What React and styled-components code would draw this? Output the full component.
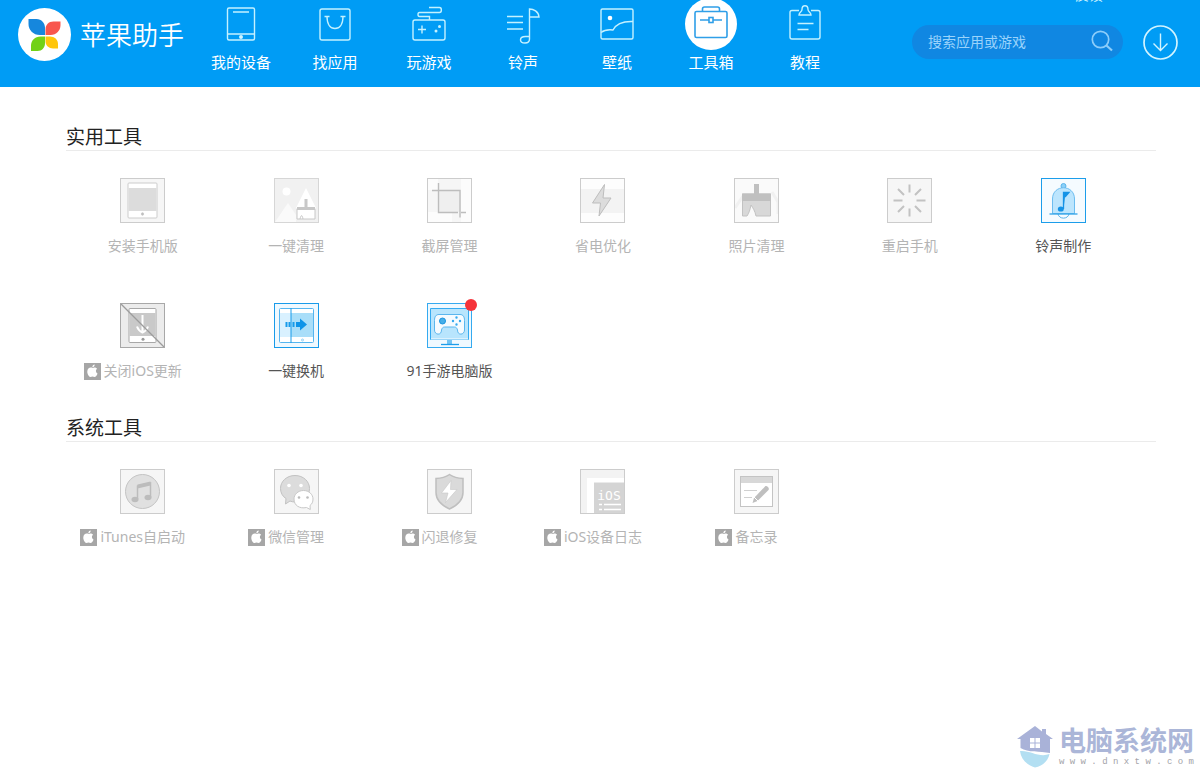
import { useState } from 'react';
import styled, { createGlobalStyle } from 'styled-components';

const GlobalStyle = createGlobalStyle`
  * {
    box-sizing: border-box;
  }

  body {
    margin: 0;
    background: #fff;
    font-family: "Noto Sans", "Noto Sans CJK SC", sans-serif;
  }

  button {
    padding: 0;
    border: none;
    background: none;
    font-family: inherit;
    cursor: pointer;
  }
`;

const Page = styled.div`
  min-height: 100vh;
  display: flex;
  flex-direction: column;
`;

const Header = styled.header`
  position: relative;
  height: 87px;
  display: flex;
  align-items: flex-start;
  padding: 0 22px 0 18px;
  background: #009cf5;
  color: #fff;
  overflow: hidden;
`;

const Brand = styled.a`
  display: flex;
  align-items: center;
  gap: 9px;
  margin-top: 8px;
  color: #fff;
  text-decoration: none;
`;

const BrandName = styled.span`
  padding-top: 2px;
  font-size: 26px;
  line-height: 51px;
  font-weight: 350;
  white-space: nowrap;
`;

const Nav = styled.nav`
  display: flex;
  margin-left: 10px;
`;

const NavItem = styled.button`
  width: 94px;
  display: flex;
  flex-direction: column;
  align-items: center;
  color: #fff;
  font-size: 15px;
  line-height: 24px;
  white-space: nowrap;
`;

const NavIcon = styled.span`
  width: 52px;
  height: 52px;
  margin: -2px 0 0;
  display: flex;
  align-items: center;
  justify-content: center;
  border-radius: 50%;
  background: ${props => (props.$active ? '#fff' : 'transparent')};
  color: ${props => (props.$active ? '#2f9fe8' : '#c4f1ff')};
`;

const HeaderTools = styled.div`
  display: flex;
  align-items: flex-start;
  gap: 20px;
  margin: 25px 0 0 auto;
`;

const FeedbackLink = styled.a`
  position: absolute;
  top: -14px;
  right: 97px;
  color: #d2f4ff;
  font-size: 14px;
  line-height: 18px;
  text-decoration: none;
`;

const SearchForm = styled.form`
  width: 211px;
  height: 34px;
  display: flex;
  align-items: center;
  padding: 0 10px 2px 16px;
  border-radius: 17px;
  background: #1087e2;
`;

const SearchInput = styled.input`
  flex: 1;
  min-width: 0;
  padding: 0;
  border: none;
  outline: none;
  background: transparent;
  color: #fff;
  font-family: inherit;
  font-size: 14px;

  &::placeholder {
    color: #9ad3fb;
    opacity: 1;
  }
`;

const IconButton = styled.button`
  display: flex;
  color: ${props => props.$color};
`;

const Main = styled.main`
  padding: 37px 44px 0 66px;
`;

const Section = styled.section`
  margin-bottom: 33px;
`;

const SectionTitle = styled.h2`
  margin: 0;
  border-bottom: 1px solid #ebebeb;
  color: #222;
  font-size: 19px;
  line-height: 26px;
  font-weight: 400;
`;

const ToolGrid = styled.div`
  display: grid;
  grid-template-columns: repeat(7, 1fr);
  row-gap: 46px;
  padding: 27px 16px 0 0;
`;

const Tool = styled.button`
  display: flex;
  flex-direction: column;
  align-items: center;
  gap: 12px;
  color: ${props => (props.$on ? '#555' : '#b4b4b4')};
`;

const ToolIcon = styled.span`
  position: relative;
  display: flex;
`;

const Dot = styled.span`
  position: absolute;
  top: -4px;
  right: -5px;
  width: 12px;
  height: 12px;
  border-radius: 50%;
  background: #f5333a;
`;

const ToolLabel = styled.span`
  display: flex;
  align-items: center;
  gap: 3px;
  padding-right: ${props => (props.$badge ? '20px' : '0')};
  font-size: 14px;
  line-height: 22px;
  white-space: nowrap;
`;

const Footer = styled.footer`
  display: flex;
  align-items: center;
  justify-content: flex-end;
  gap: 6px;
  margin-top: auto;
  padding: 0 6px 2px;
`;

const SiteName = styled.div`
  color: #abb6d8;
  font-size: 27px;
  line-height: 30px;
  font-weight: 700;
`;

const SiteUrl = styled.div`
  color: #a3a3a8;
  font-family: "Liberation Mono", monospace;
  font-size: 9px;
  line-height: 12px;
`;

/* header drawings */

const Logo = () => (
  <svg width="53" height="53" viewBox="0 0 53 53">
    <circle cx="26.500" cy="26.500" r="26.500" fill="#fff" />
    <path d="M10.500 11h8c5 0 8.500 4 8.500 9v7h-5c-7 0-11.500-5-11.500-11z" fill="#1687dd" />
    <path d="M42.500 13.500h-7c-5 0-8 3.500-8 8V27h5c6 0 10-4.500 10-10z" fill="#f8564d" />
    <path d="M13 43h6.500c4.500 0 7.500-3.500 7.500-8v-6.500h-4.500c-5.500 0-9.500 4-9.500 9z" fill="#72d117" />
    <path d="M40 40.500h-5c-4 0-7.500-3-7.500-7v-5h4.500c4.500 0 8 3 8 7.500z" fill="#ffc60b" />
  </svg>
);

const Line = ({ children }) => (
  <svg width="36" height="40" viewBox="0 0 36 40" fill="none" stroke="currentColor" strokeWidth="1.400">
    {children}
  </svg>
);

const navItems = [
  {
    label: '我的设备',
    icon: (
      <>
        <rect x="4.500" y="4" width="27" height="32" rx="1.500" />
        <path d="M4.500 30h27M10 8h16" />
        <circle cx="18" cy="33" r="1.300" fill="#fff" />
      </>
    ),
  },
  {
    label: '找应用',
    icon: (
      <>
        <rect x="3" y="5" width="30" height="31" rx="2" />
        <path d="M7.500 12.500h5M23.500 12.500h5M10 12.500c0 8 3.500 12 8 12s8-4 8-12" />
      </>
    ),
  },
  {
    label: '玩游戏',
    icon: (
      <>
        <rect x="2" y="16" width="32" height="20" rx="2" />
        <path d="M18.500 16v-3.500H8.500c-2 0-2-4 0-4h20c2.500 0 2.500-5 0-5H18M7 25.500h8M11 21.500v8" />
        <circle cx="28.500" cy="22.500" r="1.500" fill="currentColor" stroke="none" />
        <circle cx="25" cy="27" r="1.500" fill="currentColor" stroke="none" />
      </>
    ),
  },
  {
    label: '铃声',
    icon: (
      <path d="M2 12.500h16M2 18.500h16M2 25h16M24.500 35V5c4 0 9 2.500 9.500 8h-9.500M24.500 32.500h-4c-3 0-5 1.500-5 3.500s1.500 3 4.500 3 4.500-1.500 4.500-4" />
    ),
  },
  {
    label: '壁纸',
    icon: (
      <>
        <rect x="2" y="5" width="32" height="30" rx="1.500" />
        <path d="M2 28.500c4-3 8-3 12-2.500 2-4 7-9 20-8.500" />
        <circle cx="11" cy="14" r="2.300" fill="#fff" stroke="none" />
      </>
    ),
  },
  {
    label: '工具箱',
    icon: (
      <>
        <rect x="2" y="7.500" width="32" height="26" rx="1.500" strokeWidth="1.600" />
        <path d="M9.500 7.500V5c0-1.200.8-2 2-2h13c1.200 0 2 .8 2 2v2.500M7 16h9M20 16h9" strokeWidth="1.600" />
        <rect x="16" y="13.500" width="4" height="5" strokeWidth="1.600" />
      </>
    ),
  },
  {
    label: '教程',
    icon: (
      <>
        <path d="M12 6.500H5c-1.500 0-2 .7-2 2V33c0 1.500.7 2 2 2h26c1.500 0 2-.7 2-2V8.500c0-1.500-.7-2-2-2h-7" />
        <path d="M12 11c0-3 3-3 3-5.500 0-5 6-5 6 0C21 8 24 8 24 11zM10.500 19.500h16M10.500 25.500h11" />
      </>
    ),
  },
];

const SearchIcon = () => (
  <svg width="22" height="22" viewBox="0 0 22 22" fill="none" stroke="currentColor" strokeWidth="1.700">
    <circle cx="9.500" cy="9.500" r="8.200" />
    <path d="M15.500 15.500l5.500 5" strokeWidth="2.200" />
  </svg>
);

const DownloadIcon = () => (
  <svg width="35" height="35" viewBox="0 0 35 35" fill="none" stroke="currentColor" strokeWidth="1.700">
    <circle cx="17.500" cy="17.500" r="16.500" />
    <path d="M17.500 8.500v17M10.500 18.500l7 7 7-7" strokeWidth="1.400" />
  </svg>
);

/* tool drawings, all on a 45px tile */

const Tile = ({ fill = '#f6f6f6', stroke = '#ccc', children }) => (
  <svg width="45" height="45" viewBox="0 0 45 45" fill="none" stroke={stroke}>
    <rect x="0.500" y="0.500" width="44" height="44" fill={fill} stroke="none" />
    {children}
    <rect x="0.500" y="0.500" width="44" height="44" />
  </svg>
);

const AppleBadge = () => (
  <svg width="17" height="17" viewBox="0 0 17 17">
    <rect width="17" height="17" fill="#a6a6a6" />
    <path
      d="M8.600 5c1.200-.8 3.300-.8 4.500.8-1.700 1-1.600 3.700.4 4.700-.6 2-1.800 3.500-3 3.500-.8 0-1.200-.4-2-.4s-1.200.4-2 .4C4.800 14 3.200 10.800 3.300 8.500c.1-3.200 2.800-4.700 5.300-3.500zM8.300 4.300c0-1.500 1-2.500 2.400-2.700.1 1.500-1 2.700-2.400 2.700z"
      fill="#fff"
    />
  </svg>
);

const tools = [
  {
    label: '安装手机版',
    icon: (
      <Tile>
        <rect x="8" y="5" width="29" height="35" rx="1" fill="#fff" />
        <path d="M8.500 10h28v23h-28z" fill="#dcdcdc" stroke="none" />
        <circle cx="22.500" cy="36" r="1.200" fill="#bbb" />
      </Tile>
    ),
  },
  {
    label: '一键清理',
    icon: (
      <Tile fill="#f1f1f1" stroke="#d6d6d6">
        <circle cx="12.500" cy="13.500" r="4" fill="#fff" stroke="none" />
        <path d="M1 44l13-19 8 12v7z" fill="#fafafa" stroke="none" />
        <path d="M22 30l10-20 10 20z" fill="#fff" stroke="none" />
        <path d="M23 31h18v10H23zM26 41c1-4 2-5 3 0" fill="#fff" stroke="#c8c8c8" />
        <path d="M32 21v9M23 30.500h18" stroke="#c8c8c8" strokeWidth="3" />
      </Tile>
    ),
  },
  {
    label: '截屏管理',
    icon: (
      <Tile fill="#fcfcfc">
        <path d="M11 0h23v45H25V34H0V12h11z" fill="#f6f6f6" stroke="none" />
        <path d="M11.500 13h21v21h-21z" fill="#efefef" stroke="none" />
        <path d="M11.500 5v29.500H31M5 12.500h28v27M34 34.500h5" stroke="#bdbdbd" strokeWidth="1.400" />
      </Tile>
    ),
  },
  {
    label: '省电优化',
    icon: (
      <Tile fill="#fdfdfd">
        <path d="M1 11h43v24H1z" fill="#f3f3f3" stroke="none" />
        <path d="M24.500 6.500L12.500 25h8l-1.500 13 12-18h-8z" fill="#dcdcdc" stroke="#bdbdbd" />
      </Tile>
    ),
  },
  {
    label: '照片清理',
    icon: (
      <Tile fill="#fafafa">
        <path d="M1 30L9 18M38 14l6 10v12" stroke="#f1f1f1" strokeWidth="3" />
        <path d="M8.500 16h28v22H22c-1-5-3-8-5-11-1 5-2 8-4 11H8.500z" fill="#d8d8d8" stroke="#c2c2c2" />
        <path d="M8 15.500h29V23H8zM20 6h5v10h-5z" fill="#c0c0c0" stroke="none" />
      </Tile>
    ),
  },
  {
    label: '重启手机',
    icon: (
      <Tile>
        <path
          d="M22.500 6.500v8M22.500 30.500v8M6.500 22.500h9M29.500 22.500h9M11 11l6 6M28 28l6 6M34 11l-6 6M17 28l-6 6"
          stroke="#c2c2c2"
          strokeWidth="2"
        />
      </Tile>
    ),
  },
  {
    label: '铃声制作',
    on: true,
    icon: (
      <Tile fill="#f5fbff" stroke="#1c9dea">
        <circle cx="22.500" cy="8" r="2.500" fill="#8bd0f8" stroke="#5bb4ea" />
        <path d="M17 36c1 5.500 10 5.500 11 0" fill="#f5fbff" stroke="#5bb4ea" />
        <path d="M11.500 35.500V21c0-15 22-15 22 0v14.500z" fill="#bce5fd" stroke="#6cbdf0" />
        <path d="M8.500 36h28" stroke="#2fa2e8" strokeWidth="1.300" />
        <path d="M22.500 31V14.500h5.500l-4 4.500" fill="#1593e6" stroke="#1593e6" strokeWidth="1.300" />
        <ellipse cx="19.800" cy="31" rx="3" ry="2.600" fill="#1593e6" stroke="none" />
      </Tile>
    ),
  },
  {
    label: '关闭iOS更新',
    badge: true,
    icon: (
      <Tile fill="#ececec" stroke="#a8a8a8">
        <rect x="9" y="5.500" width="27" height="34" rx="1" fill="#fff" />
        <path d="M9.500 10h26v23h-26z" fill="#c9c9c9" stroke="none" />
        <path d="M22.500 12v16M17 23.500c1 3 3 5 5.500 6 2.500-1 4.500-3 5.500-6" stroke="#fff" strokeWidth="2" />
        <circle cx="23" cy="36.200" r="1.500" fill="#999" stroke="none" />
        <path d="M1 1l43 43" stroke="#9c9c9c" strokeWidth="1.300" />
      </Tile>
    ),
  },
  {
    label: '一键换机',
    on: true,
    icon: (
      <Tile fill="#eff9ff" stroke="#189bea">
        <rect x="5.500" y="5.500" width="34" height="34" rx="1" fill="#fff" stroke="#55b5ef" />
        <path d="M6 10h11v24H6z" fill="#d9f1ff" stroke="none" />
        <path d="M17 10h22v24H17z" fill="#a9def9" stroke="none" />
        <path d="M17 5v35" />
        <circle cx="28.500" cy="37" r="1" stroke="#8fcff5" />
        <path d="M12.500 19v5M15.500 19v5M19.500 19v5" strokeWidth="2" />
        <path d="M22 19h4v-3.500l7 6-7 6V24h-4z" fill="#0f94e8" stroke="none" />
      </Tile>
    ),
  },
  {
    label: '91手游电脑版',
    on: true,
    dot: true,
    icon: (
      <Tile fill="#eff9ff" stroke="#35aaf0">
        <path d="M3.500 5.500h38v31h-38z" fill="#b8e5fd" />
        <path d="M4 36h37" stroke="#fff" />
        <path d="M20 37h5v4h-5z" fill="#72c4f3" stroke="none" />
        <path d="M14 41.500h18" stroke="#1c9dea" strokeWidth="1.300" />
        <path
          d="M12 11.500h21c3 0 4.500 2 4.500 6V27c0 5-7 6-7 0-.5-2-1.500-3-3-3h-10c-1.500 0-2.500 1-3 3 0 6-7 5-7 0v-9.500c0-4 1.500-6 4.500-6z"
          fill="#f5fbff"
          stroke="#5ab6ee"
        />
        <circle cx="15.500" cy="18" r="3" fill="#46afe9" stroke="#1c95df" />
        <path d="M29.500 14.500h.01M29.500 21.500h.01M26 18h.01M33 18h.01" strokeWidth="2.400" strokeLinecap="round" />
      </Tile>
    ),
  },
];

const systemTools = [
  {
    label: 'iTunes自启动',
    badge: true,
    icon: (
      <Tile>
        <circle cx="22.500" cy="22.500" r="17" fill="#e0e0e0" stroke="#c4c4c4" />
        <path d="M17.500 30V17l13-3v14.500" stroke="#bcbcbc" strokeWidth="1.500" />
        <path d="M17.500 15.500l13-3v4l-13 3z" fill="#bcbcbc" stroke="none" />
        <ellipse cx="15" cy="30.500" rx="3.500" ry="2.800" fill="#bcbcbc" stroke="none" />
        <ellipse cx="28" cy="28.500" rx="3.500" ry="2.800" fill="#bcbcbc" stroke="none" />
      </Tile>
    ),
  },
  {
    label: '微信管理',
    badge: true,
    icon: (
      <Tile>
        <path
          d="M21 6.500c8.500 0 14.500 6 14.500 13s-6 13.500-14.500 13.500c-2 0-3.500-.3-5-1l-4.500 3 .5-5.500c-3.500-2-5.500-6-5.500-10 0-7 6-13 14.500-13z"
          fill="#dcdcdc"
          stroke="#c2c2c2"
        />
        <circle cx="15" cy="16.500" r="1.800" fill="#fff" stroke="none" />
        <circle cx="27" cy="16.500" r="1.800" fill="#fff" stroke="none" />
        <path
          d="M29.500 21.500c5.500 0 9.500 4 9.500 8.500 0 3-1 5-3 6.500l.3 4-3.800-2c-7 1.500-12.500-2-12.500-8.500 0-4.500 4-8.500 9.500-8.500z"
          fill="#fff"
          stroke="#c8c8c8"
        />
        <circle cx="25" cy="28.500" r="1.300" fill="#bbb" stroke="none" />
        <circle cx="33.500" cy="28.500" r="1.300" fill="#bbb" stroke="none" />
      </Tile>
    ),
  },
  {
    label: '闪退修复',
    badge: true,
    icon: (
      <Tile>
        <path
          d="M22.500 5.500c4.500 3 9 3.800 13.500 4v14c0 8-6 13-13.500 16.500C15 36.500 9 31.500 9 23.500v-14c4.500-.2 9-1 13.500-4z"
          fill="#dadada"
          stroke="#bfbfbf"
          strokeWidth="1.500"
        />
        <path d="M24 11.500L14.500 24H21l-2.500 9.500L30 20.500h-6.500z" fill="#fff" stroke="#c8c8c8" strokeWidth="0.600" />
      </Tile>
    ),
  },
  {
    label: 'iOS设备日志',
    badge: true,
    icon: (
      <Tile fill="#fff">
        <path d="M1 1h43v8H7v35H1z" fill="#f3f3f3" stroke="none" />
        <path d="M14 13.500h30V44H14z" fill="#d4d4d4" stroke="none" />
        <text x="29" y="31" textAnchor="middle" fontFamily="DejaVu Sans Mono, monospace" fontSize="13" fill="#fff" stroke="none">
          iOS
        </text>
        <path d="M19 35.500h3M24 35.500h17M19 40.500h3M24 40.500h17" stroke="#fff" strokeWidth="1.500" />
      </Tile>
    ),
  },
  {
    label: '备忘录',
    badge: true,
    icon: (
      <Tile>
        <rect x="6.500" y="7.500" width="32" height="30" fill="#fff" stroke="#c4c4c4" />
        <path d="M7 8h31v6H7z" fill="#d8d8d8" stroke="none" />
        <path d="M10 21.500h13M10 28.500h8" stroke="#d0d0d0" />
        <path d="M20 29l11-11.500c1.500-1.500 5 1.500 3.500 3.500L23.500 32l-5 2z" fill="#bfbfbf" stroke="none" />
        <path d="M20 28l4.500 4.500" stroke="#fff" />
      </Tile>
    ),
  },
];

const HouseIcon = () => (
  <svg width="36" height="42" viewBox="0 0 36 42">
    <path d="M18 0L0 13h3.500v9c8 5 19 3 29.500 5V13h3L29 8V3h-4v2.500z" fill="#a9b2d8" />
    <path d="M3 25c10-1 19 7 29.500 3-1.500 7-7 12-14.500 13.500C10 39 4 33.500 3 25z" fill="#b3dff2" />
    <path d="M13 12h4.500v4.500H13zM18.500 12H23v4.500h-4.500zM13 17.500h4.500V22H13zM18.500 17.500H23V22h-4.500z" fill="#fff" />
  </svg>
);

const ToolSection = ({ title, items }) => (
  <Section>
    <SectionTitle>{title}</SectionTitle>
    <ToolGrid>
      {items.map(item => (
        <Tool key={item.label} type="button" $on={item.on}>
          <ToolIcon>
            {item.icon}
            {item.dot && <Dot />}
          </ToolIcon>
          <ToolLabel $badge={item.badge}>
            {item.badge && <AppleBadge />}
            {item.label}
          </ToolLabel>
        </Tool>
      ))}
    </ToolGrid>
  </Section>
);

const App = () => {
  const [active, setActive] = useState('工具箱');
  const [query, setQuery] = useState('');

  return (
    <Page>
      <GlobalStyle />
      <Header>
        <Brand href="#">
          <Logo />
          <BrandName>苹果助手</BrandName>
        </Brand>
        <Nav>
          {navItems.map(item => (
            <NavItem key={item.label} type="button" onClick={() => setActive(item.label)}>
              <NavIcon $active={item.label === active}>
                <Line>{item.icon}</Line>
              </NavIcon>
              {item.label}
            </NavItem>
          ))}
        </Nav>
        <FeedbackLink href="#">反馈</FeedbackLink>
        <HeaderTools>
          <SearchForm onSubmit={e => e.preventDefault()}>
            <SearchInput
              aria-label="搜索应用或游戏"
              placeholder="搜索应用或游戏"
              value={query}
              onChange={e => setQuery(e.target.value)}
            />
            <IconButton type="submit" aria-label="搜索" $color="#8ccdfa">
              <SearchIcon />
            </IconButton>
          </SearchForm>
          <IconButton type="button" aria-label="下载" $color="#d2f4ff">
            <DownloadIcon />
          </IconButton>
        </HeaderTools>
      </Header>

      <Main>
        <ToolSection title="实用工具" items={tools} />
        <ToolSection title="系统工具" items={systemTools} />
      </Main>

      <Footer>
        <HouseIcon />
        <div>
          <SiteName>电脑系统网</SiteName>
          <SiteUrl>w w w . d n x t w . c o m</SiteUrl>
        </div>
      </Footer>
    </Page>
  );
};

export default App;
